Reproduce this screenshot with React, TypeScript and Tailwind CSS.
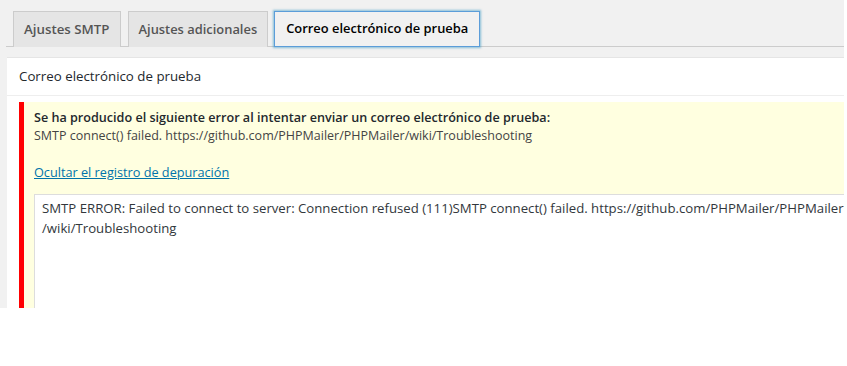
export default function App() {
  return (
    <div className="w-[847px] h-[366px] bg-white" style={{ fontFamily: "'Open Sans', sans-serif" }}>
      <div className="w-[844px] h-[308px] bg-[#f1f1f1] overflow-hidden">
        <div className="ml-[6px] pt-[11px] pl-[7px] flex gap-[7px] border-b border-[#ccc] h-[47px]">
          <div className="h-[36px] px-[10px] flex items-center border border-[#ccc] border-b-0 bg-[#e5e5e5] text-[#555] text-[13.3px] font-semibold">
            Ajustes SMTP
          </div>
          <div className="h-[36px] px-[10px] flex items-center border border-[#ccc] border-b-0 bg-[#e5e5e5] text-[#555] text-[12.9px] font-semibold">
            Ajustes adicionales
          </div>
          <div className="-ml-px h-[36px] px-[11px] flex items-center border border-[#5b9dd9] bg-[#f1f1f1] text-black text-[12.9px] font-semibold shadow-[0_0_2px_1px_rgba(30,140,190,0.5)]">
            Correo electrónico de prueba
          </div>
        </div>
        <div className="ml-[7px] mt-[10px] w-[900px] bg-white border-t border-[#e5e5e5]">
          <div className="h-[38px] pl-[12px] flex items-center border-b border-[#eee] text-[13.3px] text-[#23282d]">
            Correo electrónico de prueba
          </div>
          <div className="ml-[12px] mt-[6px] border-l-[5px] border-[#ff0000] bg-[#ffffe0] pl-[10px] pt-[7px] text-[13px] text-[#444]">
            <div className="leading-[18px] font-semibold text-[12.6px] text-[#23282d]">
              Se ha producido el siguiente error al intentar enviar un correo electrónico de prueba:
            </div>
            <div className="leading-[18px] text-[12.5px]">
              SMTP connect() failed. https://github.com/PHPMailer/PHPMailer/wiki/Troubleshooting
            </div>
            <div className="leading-[18px] mt-[18px] text-[12.7px]">
              <a className="text-[#0073aa] underline" href="#">Ocultar el registro de depuración</a>
            </div>
            <div className="mt-[13px] h-[130px] bg-white border border-[#ddd] pl-[7px] pt-[3px] leading-[20px] text-[13.2px] text-[#32373c] whitespace-nowrap">
              <div>SMTP ERROR: Failed to connect to server: Connection refused (111)SMTP connect() failed. https://github.com/PHPMailer/PHPMailer</div>
              <div>/wiki/Troubleshooting</div>
            </div>
          </div>
        </div>
      </div>
    </div>
  );
}
